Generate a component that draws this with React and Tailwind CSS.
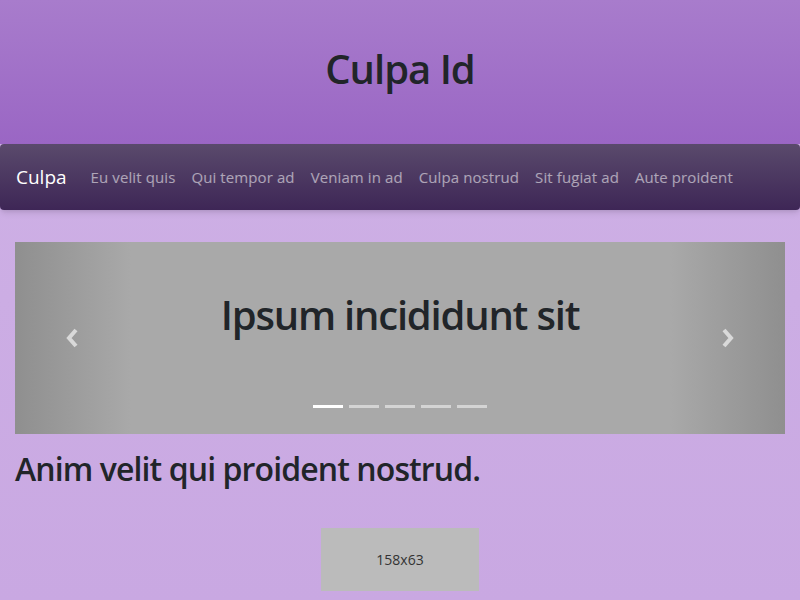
import React from 'react';

const links = ['Eu velit quis', 'Qui tempor ad', 'Veniam in ad', 'Culpa nostrud', 'Sit fugiat ad', 'Aute proident'];

const Chevron = ({ dir }) => (
  <svg width="16" height="22" viewBox="0 0 16 22" className="text-[#d9d9d9]">
    <path
      d={dir === 'left' ? 'M11 3 L4 11 L11 19' : 'M5 3 L12 11 L5 19'}
      fill="none"
      stroke="currentColor"
      strokeWidth="4"
    />
  </svg>
);

export default function App() {
  return (
    <div className="min-h-[600px] bg-gradient-to-b from-[#cfb2e6] to-[#c9a8e2] font-['Open_Sans',sans-serif] text-[#212529]">
      {/* Header */}
      <header className="flex h-[144px] items-center justify-center bg-gradient-to-b from-[#a87ccc] to-[#9a66c4]">
        <h1 className="-mt-[6px] text-[40px] font-semibold leading-none tracking-[-1px]">Culpa Id</h1>
      </header>

      {/* Navbar */}
      <nav className="flex h-[66px] items-center rounded-[4px] bg-gradient-to-b from-[#5a4a6c] to-[#3e2656] px-4 shadow-md">
        <span className="mr-4 text-[19px] text-white">Culpa</span>
        <div className="flex items-center">
          {links.map((l) => (
            <span key={l} className="px-2 text-[15px] tracking-[0.1px] text-white/55">{l}</span>
          ))}
        </div>
      </nav>

      <main className="px-[15px] pt-8">
        {/* Carousel */}
        <div className="relative flex h-[192px] items-center justify-center bg-[#a9a9a9]">
          <div className="absolute inset-y-0 left-0 flex w-[15%] items-center justify-center bg-gradient-to-r from-[#8f8f8f] to-[#a9a9a9]">
            <Chevron dir="left" />
          </div>
          <h2 className="-mt-[46px] text-[40px] font-semibold leading-[48px] tracking-[-1.2px]">Ipsum incididunt sit</h2>
          <div className="absolute inset-y-0 right-0 flex w-[15%] items-center justify-center bg-gradient-to-l from-[#8f8f8f] to-[#a9a9a9]">
            <Chevron dir="right" />
          </div>
          <div className="absolute bottom-[26px] left-0 right-0 flex justify-center gap-[6px]">
            <span className="h-[3px] w-[30px] bg-white" />
            <span className="h-[3px] w-[30px] bg-white/50" />
            <span className="h-[3px] w-[30px] bg-white/50" />
            <span className="h-[3px] w-[30px] bg-white/50" />
            <span className="h-[3px] w-[30px] bg-white/50" />
          </div>
        </div>

        <h3 className="mt-4 text-[32px] font-semibold leading-[1.2] tracking-[-0.9px]">Anim velit qui proident nostrud.</h3>

        <div className="mt-[40px] flex justify-center">
          <div className="flex h-[63px] w-[158px] items-center justify-center bg-[#bbbbbb] text-[14px] text-[#333]">
            158x63
          </div>
        </div>
      </main>
    </div>
  );
}
